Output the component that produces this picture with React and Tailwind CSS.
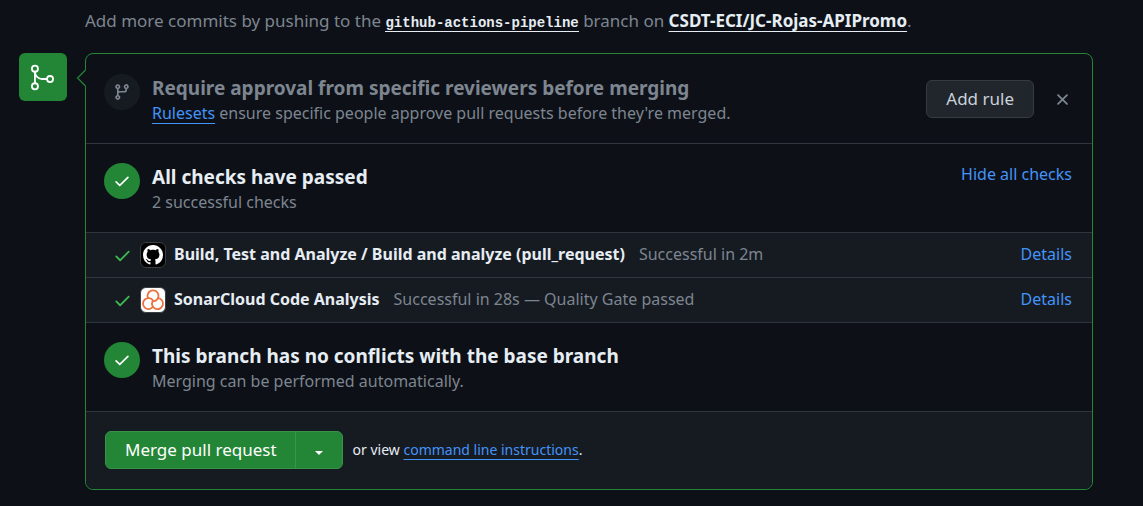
const CHECK =
  'M13.78 4.22a.75.75 0 0 1 0 1.06l-7.25 7.25a.75.75 0 0 1-1.06 0L2.22 9.28a.751.751 0 0 1 .018-1.042.751.751 0 0 1 1.042-.018L6 10.94l6.72-6.72a.75.75 0 0 1 1.06 0Z';
const BRANCH =
  'M9.5 3.25a2.25 2.25 0 1 1 3 2.122V6A2.5 2.5 0 0 1 10 8.5H6a1 1 0 0 0-1 1v1.128a2.251 2.251 0 1 1-1.5 0V5.372a2.25 2.25 0 1 1 1.5 0v1.836A2.493 2.493 0 0 1 6 7h4a1 1 0 0 0 1-1v-.628A2.25 2.25 0 0 1 9.5 3.25Zm-6 0a.75.75 0 1 0 1.5 0 .75.75 0 0 0-1.5 0Zm8.25-.75a.75.75 0 1 0 0 1.5.75.75 0 0 0 0-1.5ZM4.25 12a.75.75 0 1 0 0 1.5.75.75 0 0 0 0-1.5Z';
const CLOSE =
  'M3.72 3.72a.75.75 0 0 1 1.06 0L8 6.94l3.22-3.22a.749.749 0 0 1 1.275.326.749.749 0 0 1-.215.734L9.06 8l3.22 3.22a.749.749 0 0 1-.326 1.275.749.749 0 0 1-.734-.215L8 9.06l-3.22 3.22a.751.751 0 0 1-1.042-.018.751.751 0 0 1-.018-1.042L6.94 8 3.72 4.78a.75.75 0 0 1 0-1.06Z';
const GITHUB =
  'M8 0c4.42 0 8 3.58 8 8a8.013 8.013 0 0 1-5.45 7.59c-.4.08-.55-.17-.55-.38 0-.27.01-1.13.01-2.2 0-.75-.25-1.23-.54-1.48 1.78-.2 3.65-.88 3.65-3.95 0-.88-.31-1.59-.82-2.15.08-.2.36-1.02-.08-2.12 0 0-.67-.22-2.2.82-.64-.18-1.32-.27-2-.27-.68 0-1.36.09-2 .27-1.53-1.03-2.2-.82-2.2-.82-.44 1.1-.16 1.92-.08 2.12-.51.56-.82 1.28-.82 2.15 0 3.06 1.86 3.75 3.64 3.95-.23.2-.44.55-.51 1.07-.46.21-1.61.55-2.33-.66-.15-.24-.6-.83-1.23-.82-.67.01-.27.38.01.53.34.19.73.9.82 1.13.16.45.68 1.31 2.69.94 0 .67.01 1.3.01 1.49 0 .21-.15.45-.55.38A7.995 7.995 0 0 1 0 8c0-4.42 3.58-8 8-8Z';
const SONAR_LOOP = 'M7 10.1A5.5 5.5 0 1 1 12.500 13.300';

function Icon({ d, className }) {
  return (
    <svg viewBox="0 0 16 16" fill="currentColor" aria-hidden="true" className={className}>
      <path d={d} />
    </svg>
  );
}

function MergeIcon() {
  return (
    <svg viewBox="0 0 24 24" fill="currentColor" aria-hidden="true" className="size-[29px]">
      <path d="M15 13.25a3.25 3.25 0 1 1 6.5 0 3.25 3.25 0 0 1-6.5 0Zm-12.5 6a3.25 3.25 0 1 1 6.5 0 3.25 3.25 0 0 1-6.5 0Zm0-14.5a3.25 3.25 0 1 1 6.5 0 3.25 3.25 0 0 1-6.5 0ZM5.75 6.5a1.75 1.75 0 1 0-.001-3.501A1.75 1.75 0 0 0 5.75 6.5Zm0 14.5a1.75 1.75 0 1 0-.001-3.501A1.75 1.75 0 0 0 5.75 21Zm12.5-6a1.75 1.75 0 1 0-.001-3.501A1.75 1.75 0 0 0 18.25 15Z" />
      <path d="M6.5 7.25c0 2.9 2.35 5.25 5.25 5.25h4.5V14h-4.5A6.75 6.75 0 0 1 5 7.25Z" />
      <path d="M5.75 16.75A.75.75 0 0 1 5 16V8a.75.75 0 0 1 1.5 0v8a.75.75 0 0 1-.75.75Z" />
    </svg>
  );
}

function GithubAvatar() {
  return (
    <span className="flex size-[26px] shrink-0 items-center justify-center rounded-md border border-[#3a3d42] bg-black text-white">
      <Icon d={GITHUB} className="size-5" />
    </span>
  );
}

function SonarAvatar() {
  return (
    <span className="flex size-[26px] shrink-0 items-center justify-center rounded-md border border-[#3a3d42] bg-white">
      <svg viewBox="0 0 24 24" fill="none" stroke="#ec7340" strokeWidth="1.8" strokeLinecap="round" aria-hidden="true" className="size-6">
        <path d={SONAR_LOOP} />
        <path d={SONAR_LOOP} transform="rotate(120 12 13)" />
        <path d={SONAR_LOOP} transform="rotate(240 12 13)" />
      </svg>
    </span>
  );
}

function StatusRow({ icon, badge, title, titleColor, children, action }) {
  return (
    <section className="flex items-start gap-3 border-b border-[#30363d] pt-[19px] pr-5 pb-[19px] pl-[18px]">
      <span className={`flex size-9 shrink-0 items-center justify-center rounded-full ${badge}`}>
        <Icon d={icon} className="size-[18px]" />
      </span>
      <div className="min-w-0 flex-1">
        <h3 className={`text-[19px] leading-7 font-bold ${titleColor}`}>{title}</h3>
        <p className="text-base leading-[22px] text-[#7d8590]">{children}</p>
      </div>
      {action}
    </section>
  );
}

function CheckRow({ avatar, name, status }) {
  return (
    <li className="flex h-[45px] items-center border-b border-[#30363d] bg-[#161b22] pr-5 pl-[27px] text-base">
      <Icon d={CHECK} className="size-[19px] shrink-0 text-[#3fb950]" />
      <span className="mr-2 ml-2 flex">{avatar}</span>
      <div className="flex flex-1 items-center pb-0.5">
        <strong className="font-bold text-[#e6edf3]">{name}</strong>
        <span className="ml-[14px] flex-1 text-[#7d8590]">{status}</span>
        <a href="#details" className="text-[#4493f8]">Details</a>
      </div>
    </li>
  );
}

export default function App() {
  return (
    <main className="min-h-screen bg-[#0d1117] pt-2 pr-[50px] pb-4 pl-[19px] font-['Noto_Sans',sans-serif] text-[#e6edf3]">
      <p className="ml-[66px] text-[17px] leading-[25px] text-[#7d8590]">
        Add more commits by pushing to the{' '}
        <a href="#branch" className="border-b border-[#e6edf3] font-['Liberation_Mono',monospace] text-sm leading-4 font-bold text-[#e6edf3]">github-actions-pipeline</a>
        {' '}branch on{' '}
        <a href="#repo" className="font-bold text-[#e6edf3] underline decoration-1 underline-offset-4">CSDT-ECI/JC-Rojas-APIPromo</a>.
      </p>

      <div className="mt-5 flex items-start gap-[18px]">
        <span className="flex size-12 shrink-0 items-center justify-center rounded-md bg-[#238636] pr-0.5 text-white">
          <MergeIcon />
        </span>

        <div className="relative min-w-0 flex-1 rounded-lg border border-[#238636] pt-px">
          <svg viewBox="0 0 10 18" fill="none" aria-hidden="true" className="absolute top-[15px] -left-[10px] h-[18px] w-[10px]">
            <path d="M10 .5 1.5 9l8.500 8.500Z" fill="#0d1117" />
            <path d="M9.500 1 1.500 9l8 8" stroke="#238636" strokeWidth="1.200" />
          </svg>

          <StatusRow
            icon={BRANCH}
            badge="bg-[#161b22] text-[#7d8590]"
            title="Require approval from specific reviewers before merging"
            titleColor="text-[#7d8590]"
            action={
              <div className="mt-1.5 flex items-center gap-[19px]">
                <button type="button" className="h-[38px] rounded-md border border-[#363b42] bg-[#21262d] px-[19px] text-[17px] text-[#c9d1d9]">Add rule</button>
                <button type="button" aria-label="Dismiss" className="text-[#7d8590]">
                  <Icon d={CLOSE} className="size-[19px]" />
                </button>
              </div>
            }
          >
            <a href="#rulesets" className="text-[#4493f8] underline decoration-1 underline-offset-4">Rulesets</a> ensure specific people approve pull requests before they're merged.
          </StatusRow>

          <StatusRow
            icon={CHECK}
            badge="bg-[#238636] text-white"
            title="All checks have passed"
            titleColor="text-[#e6edf3]"
            action={<button type="button" className="text-base leading-[22px] text-[#4493f8]">Hide all checks</button>}
          >
            2 successful checks
          </StatusRow>

          <ul>
            <CheckRow avatar={<GithubAvatar />} name="Build, Test and Analyze / Build and analyze (pull_request)" status="Successful in 2m" />
            <CheckRow avatar={<SonarAvatar />} name="SonarCloud Code Analysis" status="Successful in 28s — Quality Gate passed" />
          </ul>

          <StatusRow icon={CHECK} badge="bg-[#238636] text-white" title="This branch has no conflicts with the base branch" titleColor="text-[#e6edf3]">
            Merging can be performed automatically.
          </StatusRow>

          <footer className="flex items-center gap-[10px] rounded-b-lg bg-[#161b22] px-[19px] pt-[19px] pb-5">
            <div className="flex h-[38px] overflow-hidden rounded-md border border-[#399449] bg-[#238636] text-white">
              <button type="button" className="pr-[18px] pl-[19px] text-[17px]">Merge pull request</button>
              <button type="button" aria-label="Select merge method" className="flex w-[47px] items-center justify-center border-l border-[#399449]">
                <svg viewBox="0 0 8 4" fill="currentColor" aria-hidden="true" className="mt-1.5 h-1 w-2">
                  <path d="M0 0h8L4 4Z" />
                </svg>
              </button>
            </div>
            <p className="text-sm">
              or view <a href="#cli" className="text-[#4493f8] underline decoration-1 underline-offset-4">command line instructions</a>.
            </p>
          </footer>
        </div>
      </div>
    </main>
  );
}
